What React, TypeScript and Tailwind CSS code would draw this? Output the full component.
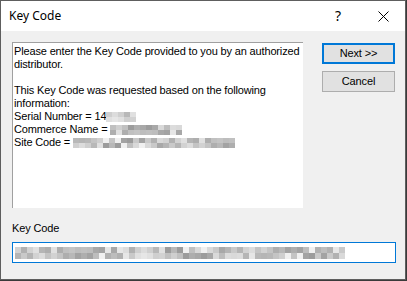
import React from 'react';

const shades = ['#a3a3a3', '#c4c4c4', '#b5b5b5', '#d9d9d9', '#9c9c9c', '#cfcfcf', '#e6e6e6', '#bdbdbd', '#aeaeae', '#d2d2d2', '#c9c9c9', '#f0f0f0', '#b8b8b8', '#dcdcdc', '#a8a8a8', '#c0c0c0', '#e0e0e0', '#b1b1b1'];

function Mosaic({ count, seed, rowH = 5 }: { count: number; seed: number; rowH?: number }) {
  const cells = (row: number) =>
    Array.from({ length: count }, (_, i) => shades[(i * 7 + seed * 5 + row * 11 + ((i * i) % 5)) % shades.length]);
  return (
    <span className="inline-flex flex-col align-middle">
      {[0, 1].map(r => (
        <span key={r} className="flex">
          {cells(r).map((c, i) => (
            <span key={i} className="block w-[6px]" style={{ background: c, height: rowH }} />
          ))}
        </span>
      ))}
    </span>
  );
}

export default function App() {
  const sans = { fontFamily: '"Liberation Sans", Arial, sans-serif' };
  return (
    <div className="w-[407px] h-[281px] bg-[#3a3a3a] overflow-hidden">
      <div className="w-[406px] h-[280px] border border-[#5e5e5e] flex flex-col">
        {/* title bar */}
        <div className="h-[30px] bg-white flex items-center shrink-0 pl-[8px]">
          <span className="text-[12px] text-black" style={{ fontFamily: '"Noto Sans", sans-serif' }}>Key Code</span>
          <span className="ml-auto mr-[37px] text-[14px] text-black leading-none" style={{ fontFamily: '"Noto Sans", sans-serif' }}>?</span>
          <svg width="11" height="11" viewBox="0 0 11 11" className="mr-[16px]">
            <path d="M0.5 0.5 L10.5 10.5 M10.5 0.5 L0.5 10.5" stroke="#000" strokeWidth="1" />
          </svg>
        </div>

        {/* body */}
        <div className="flex-1 bg-[#f0f0f0] pl-[11px] pt-[11px] text-[11px] tracking-[-0.15px] text-black" style={sans}>
          <div className="flex">
            <div className="w-[291px] h-[166px] bg-white border-l border-t border-[#a0a0a0] pl-[1px] pt-[2px] leading-[13px]">
              <div className="whitespace-nowrap">Please enter the Key Code provided to you by an authorized</div>
              <div>distributor.</div>
              <div>&nbsp;</div>
              <div className="whitespace-nowrap">This Key Code was requested based on the following</div>
              <div>information:</div>
              <div className="flex items-center h-[13px]">
                <span>Serial Number = 14</span>
                <Mosaic count={5} seed={1} rowH={5} />
              </div>
              <div className="flex items-center h-[13px]">
                <span className="mr-[3px]">Commerce Name =</span>
                <Mosaic count={12} seed={3} rowH={5} />
              </div>
              <div className="flex items-center h-[13px]">
                <span className="mr-[3px]">Site Code =</span>
                <Mosaic count={27} seed={6} rowH={5} />
              </div>
            </div>
            <div className="ml-[19px] pt-[1px] flex flex-col gap-[7px]">
              <button className="w-[73px] h-[21px] bg-[#e1e1e1] border-2 border-[#0078d7] flex items-center justify-center text-[11px]" style={sans}>
                Next &gt;&gt;
              </button>
              <button className="w-[73px] h-[21px] bg-[#e1e1e1] border border-[#adadad] flex items-center justify-center text-[11px]" style={sans}>
                Cancel
              </button>
            </div>
          </div>

          <div className="mt-[14px] leading-[13px]">Key Code</div>

          <div className="mt-[7px] w-[384px] h-[21px] bg-white border border-[#0078d7] flex items-center pl-[2px]">
            <Mosaic count={55} seed={9} rowH={6} />
          </div>
        </div>
      </div>
    </div>
  );
}
